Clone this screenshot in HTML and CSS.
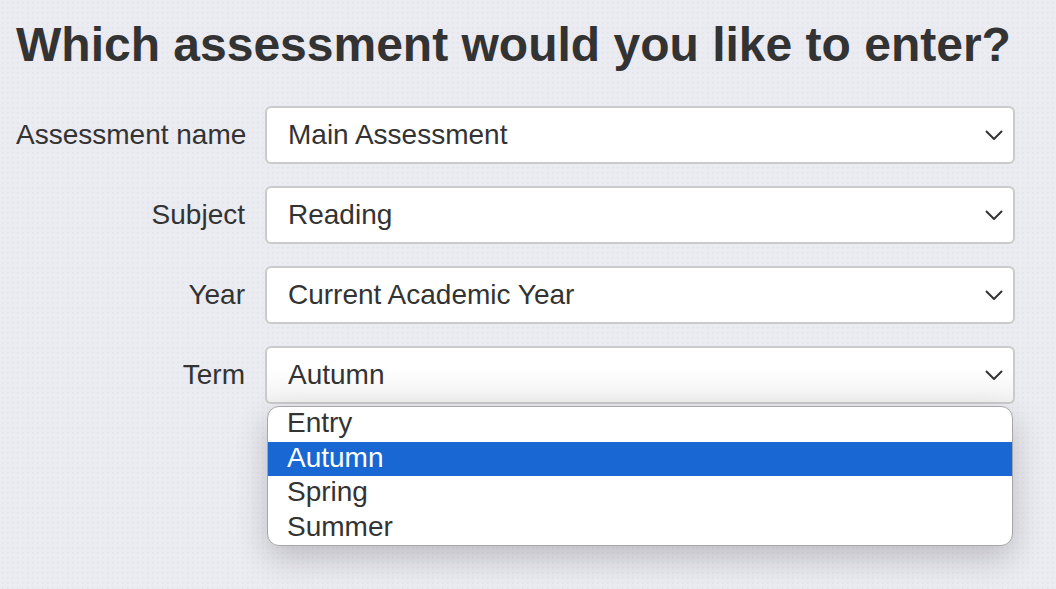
FILE: index.html
```html
<!DOCTYPE html>
<html lang="en">
<head>
    <meta charset="UTF-8">
    <meta name="viewport" content="width=device-width, initial-scale=1.0">
    <title>Enter Assessment</title>
    <link rel="stylesheet" href="styles.css">
</head>
<body>

<h1>Which assessment would you like to enter?</h1>

<div class="form">
    <label class="label">Assessment name</label>
    <div class="select">
        <span>Main Assessment</span>
        <svg class="chevron" width="18" height="10" viewBox="0 0 18 10"><path d="M1 1l8 8 8-8" fill="none" stroke="#333" stroke-width="2"/></svg>
    </div>

    <label class="label">Subject</label>
    <div class="select">
        <span>Reading</span>
        <svg class="chevron" width="18" height="10" viewBox="0 0 18 10"><path d="M1 1l8 8 8-8" fill="none" stroke="#333" stroke-width="2"/></svg>
    </div>

    <label class="label">Year</label>
    <div class="select">
        <span>Current Academic Year</span>
        <svg class="chevron" width="18" height="10" viewBox="0 0 18 10"><path d="M1 1l8 8 8-8" fill="none" stroke="#333" stroke-width="2"/></svg>
    </div>

    <label class="label">Term</label>
    <div class="select-wrap">
        <div class="select open">
            <span>Autumn</span>
            <svg class="chevron" width="18" height="10" viewBox="0 0 18 10"><path d="M1 1l8 8 8-8" fill="none" stroke="#333" stroke-width="2"/></svg>
        </div>
        <!-- open option list -->
        <ul class="options">
            <li>Entry</li>
            <li class="selected">Autumn</li>
            <li>Spring</li>
            <li>Summer</li>
        </ul>
    </div>
</div>

</body>
</html>
```

FILE: styles.css
```css
body {
    margin: 0;
    padding: 0 16px;
    background-color: #ebebf2;
    background-image: radial-gradient(rgba(0, 0, 0, 0.03) 1px, transparent 1px);
    background-size: 5px 5px;
    color: #333;
    font-family: "Liberation Sans", Arial, sans-serif;
    min-height: 589px;
}
h1 {
    font-size: 48px;
    font-weight: bold;
    line-height: 56px;
    margin: 17px 0 33px;
    white-space: nowrap;
}
.form {
    display: grid;
    grid-template-columns: 229px 750px;
    column-gap: 20px;
    row-gap: 22px;
    align-items: center;
}
.label {
    font-size: 28px;
    text-align: right;
    white-space: nowrap;
}
.select {
    box-sizing: border-box;
    height: 58px;
    display: flex;
    align-items: center;
    justify-content: space-between;
    padding: 0 10px 0 21px;
    background-color: white;
    border: 2px solid #cacaca;
    border-radius: 6px;
    font-size: 28px;
}
.select.open {
    background-image: linear-gradient(#ffffff 40%, #f1f1f1);
}
.select-wrap {
    position: relative;
}
.options {
    position: absolute;
    top: 60px;
    left: 2px;
    right: 2px;
    margin: 0;
    padding: 0;
    list-style: none;
    background-color: white;
    border: 1.5px solid #a6a6a8;
    border-radius: 12px;
    overflow: hidden;
    box-shadow: 0 12px 32px rgba(0, 0, 0, 0.2);
    font-size: 28px;
}
.options li {
    height: 34.5px;
    line-height: 31px;
    padding-left: 19px;
}
.options li.selected {
    background-color: #1967d2;
    color: white;
}
```
